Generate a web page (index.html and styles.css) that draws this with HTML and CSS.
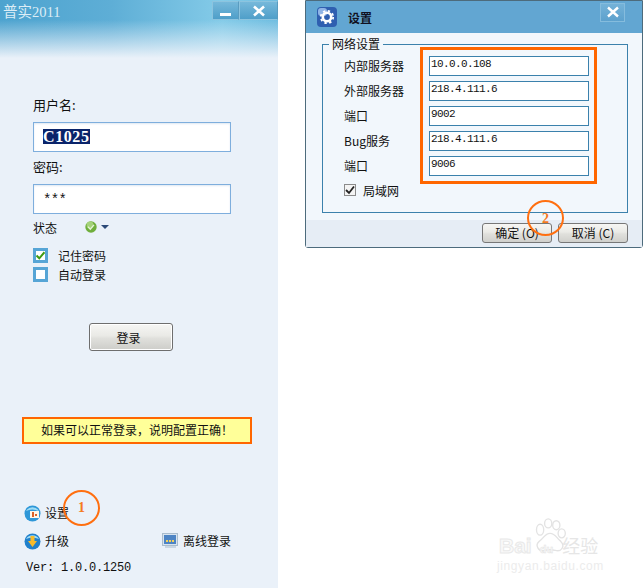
FILE: index.html
```html
<!DOCTYPE html>
<html lang="zh">
<head>
<meta charset="utf-8">
<title>普实2011</title>
<link rel="stylesheet" href="styles.css">
</head>
<body>
<main class="page">
  <section class="login">
    <header class="login-head">
      <span class="login-title">普实2011</span>
      <div class="win-btns">
        <span class="win-btn"><svg width="14" height="12" viewBox="0 0 14 12"><rect x="1" y="8" width="11" height="3" fill="#fff"/></svg></span>
        <span class="win-btn win-btn-wide"><svg width="14" height="12" viewBox="0 0 14 12"><path d="M2 1.5 L12 10.5 M12 1.5 L2 10.5" stroke="#fff" stroke-width="2.6" fill="none"/></svg></span>
      </div>
    </header>
    <div class="login-form">
      <label class="field-label">用户名:</label>
      <div class="login-input"><span class="selected">C1025</span></div>
      <label class="field-label field-label-2">密码:</label>
      <div class="login-input"><span class="mono-val">***</span></div>
      <div class="status-row">
        <span class="status-label">状态</span>
        <svg class="status-icon" width="26" height="12" viewBox="0 0 26 12">
          <circle cx="6" cy="6" r="5.7" fill="#6fae3c"/>
          <circle cx="5" cy="4" r="3.4" fill="#a4d27a"/>
          <path d="M3 5.8 L5.3 8.2 L9 3.8" stroke="#e6f3d8" stroke-width="1.3" fill="none"/>
          <path d="M16 4 H24 L20 8 Z" fill="#2c4a78"/>
        </svg>
      </div>
      <div class="check-row">
        <span class="check-box"><svg width="9" height="9" viewBox="0 0 9 9"><path d="M0.5 4.5 L3.3 7.3 L8.5 1.2" stroke="#3f9a12" stroke-width="2" fill="none"/></svg></span>
        <span>记住密码</span>
      </div>
      <div class="check-row check-row-2">
        <span class="check-box"></span>
        <span>自动登录</span>
      </div>
      <button class="login-btn">登录</button>
      <div class="notice">如果可以正常登录，说明配置正确！</div>
      <div class="link-row link-row-settings">
        <span class="link">
          <svg width="17" height="17" viewBox="0 0 17 17">
            <circle cx="8.5" cy="8.5" r="8" fill="#2e97d8"/>
            <path d="M2 6 A7.5 7.5 0 0 1 15 6 Q8 3 2 6Z" fill="#9fdcf5"/>
            <rect x="6" y="6" width="9" height="7" fill="#fdf6ea"/>
            <rect x="8" y="7" width="2" height="5" fill="#d9622b"/>
            <rect x="11" y="9" width="2" height="2" fill="#d9622b"/>
          </svg>
          设置
        </span>
      </div>
      <div class="link-row">
        <span class="link">
          <svg width="17" height="17" viewBox="0 0 17 17">
            <circle cx="8.5" cy="8.5" r="8" fill="#2080cc"/>
            <path d="M2 6 A7.5 7.5 0 0 1 15 6 Q8 3 2 6Z" fill="#9fdcf5"/>
            <path d="M6.5 3 H10.5 V8 H13 L8.5 14 L4 8 H6.5 Z" fill="#f7bb2c"/>
          </svg>
          升级
        </span>
        <span class="link">
          <svg width="17" height="17" viewBox="0 0 17 17">
            <rect x="0.5" y="0.5" width="15" height="12" fill="#d8e4ef" stroke="#a9bccd"/>
            <rect x="2" y="2" width="12" height="9" fill="#4d84c4"/>
            <rect x="4" y="7" width="2" height="2" fill="#f3d25a"/>
            <rect x="7" y="7" width="2" height="2" fill="#f3d25a"/>
            <rect x="10" y="7" width="2" height="2" fill="#f3d25a"/>
            <rect x="3" y="13" width="11" height="2" fill="#c8d6e3"/>
          </svg>
          离线登录
        </span>
      </div>
      <div class="version">Ver: 1.0.0.1250</div>
    </div>
    <div class="callout callout-1">1</div>
  </section>

  <section class="dialog">
    <header class="dialog-head">
      <svg class="dialog-icon" width="20" height="20" viewBox="0 0 20 20">
        <rect width="20" height="20" rx="4" fill="#2f5fb0"/>
        <rect x="1" y="1" width="9" height="8" rx="3" fill="#8fb4e6"/>
        <circle cx="10" cy="10" r="4.2" fill="none" stroke="#fff" stroke-width="2.6"/>
        <circle cx="10" cy="10" r="6.2" fill="none" stroke="#fff" stroke-width="1.8" stroke-dasharray="2.4 2.47"/>
      </svg>
      <span class="dialog-title">设置</span>
      <span class="dialog-close"><svg width="14" height="12" viewBox="0 0 14 12"><path d="M2 1.5 L12 10.5 M12 1.5 L2 10.5" stroke="#fff" stroke-width="2.4" fill="none"/></svg></span>
    </header>
    <div class="dialog-body">
      <fieldset class="net-group">
        <legend class="net-legend">网络设置</legend>
        <div class="net-columns">
          <div class="net-labels">
            <span>内部服务器</span>
            <span>外部服务器</span>
            <span>端口</span>
            <span>Bug服务</span>
            <span>端口</span>
          </div>
          <div class="net-inputs">
            <div class="net-input">10.0.0.108</div>
            <div class="net-input">218.4.111.6</div>
            <div class="net-input">9002</div>
            <div class="net-input">218.4.111.6</div>
            <div class="net-input">9006</div>
          </div>
        </div>
        <div class="lan-row">
          <span class="lan-check"><svg width="10" height="10" viewBox="0 0 10 10"><path d="M1 5 L4 8 L9 1.5" stroke="#222" stroke-width="1.8" fill="none"/></svg></span>
          <span>局域网</span>
        </div>
      </fieldset>
    </div>
    <footer class="dialog-foot">
      <button class="dlg-btn">确定 (O)</button>
      <button class="dlg-btn">取消 (C)</button>
    </footer>
    <div class="callout callout-2">2</div>
  </section>

  <div class="watermark" aria-hidden="true">
    <svg class="wm-paw" width="36" height="36" viewBox="0 0 40 40">
      <g fill="none" stroke="#e3e3e3" stroke-width="1.5">
        <ellipse cx="9" cy="13" rx="4" ry="6"/>
        <ellipse cx="18" cy="6" rx="4" ry="5"/>
        <ellipse cx="27" cy="8" rx="4" ry="5"/>
        <ellipse cx="33" cy="17" rx="4" ry="5"/>
        <path d="M20 17 C14 17 13 23 8 26 C3 30 7 38 14 36 C18 35 22 35 26 36 C33 38 37 31 32 26 C27 22 26 17 20 17Z"/>
      </g>
    </svg>
    <div class="wm-line1"><span class="wm-bai">Bai</span><span class="wm-du">du</span><span class="wm-jy">经验</span></div>
    <div class="wm-line2">jingyan.baidu.com</div>
  </div>
</main>
</body>
</html>
```

FILE: styles.css
```css
* { box-sizing: border-box; }
html, body { margin: 0; padding: 0; background: #fff; }
body {
  width: 643px;
  height: 588px;
  overflow: hidden;
  font-family: "Noto Sans CJK SC", "Liberation Serif", sans-serif;
  font-size: 12px;
  color: #111;
}
.page { position: relative; display: flex; align-items: flex-start; width: 643px; height: 588px; }

/* login window */
.login {
  position: relative;
  width: 278px;
  height: 588px;
  flex: none;
  background: #eaf1f9;
}
.login-head {
  height: 60px;
  display: flex;
  justify-content: space-between;
  align-items: flex-start;
  padding: 1px 0 0 3px;
  background: linear-gradient(180deg, rgba(234,241,249,0) 0, rgba(234,241,249,0) 20px, #eaf1f9 58px),
              linear-gradient(90deg, #4da3cf 0, #5eaed6 40%, #84cbe8 80%, #6fbde0 100%);
}
.login-title {
  font-family: "Liberation Serif", "Noto Sans CJK SC", serif;
  font-size: 14.5px;
  line-height: 22px;
  color: #dcedf6;
}
.win-btns { display: flex; height: 19px; }
.win-btn {
  width: 27px;
  height: 19px;
  display: flex;
  align-items: center;
  justify-content: center;
  background: linear-gradient(180deg, #76b8da, #4f9fc9);
  border: 1px solid #8cc4df;
  border-right-color: #5a9cc0;
}
.win-btn-wide { width: 39px; }

.login-form { padding: 36px 0 0 33px; }
.field-label { display: block; height: 19px; line-height: 18px; font-size: 13px; }
.field-label-2 { margin-top: 6px; }
.login-input {
  width: 198px;
  height: 30px;
  margin-top: 7px;
  border: 1px solid #7eaedd;
  box-shadow: inset 0 1px 2px #dfe8f2;
  background: #fff;
  padding: 5px 0 0 9px;
  line-height: 18px;
}
.selected {
  display: inline-block;
  background: #0a246a;
  color: #fff;
  font-family: "Liberation Serif", serif;
  font-weight: bold;
  font-size: 16px;
  line-height: 15px;
  height: 15px;
  letter-spacing: 0.6px;
}
.mono-val { font-family: "Liberation Mono", monospace; font-size: 14px; line-height: 18px; letter-spacing: -0.6px; }
.status-row { display: flex; align-items: center; height: 18px; margin-top: 4px; }
.status-label { width: 52px; }
.check-row { display: flex; align-items: center; height: 15px; margin-top: 12px; gap: 10px; }
.check-row-2 { margin-top: 4px; }
.check-box {
  width: 15px;
  height: 15px;
  display: flex;
  align-items: center;
  justify-content: center;
  border: 3px solid #56a5d6;
  background: #fff;
}
.login-btn {
  display: block;
  width: 84px;
  height: 28px;
  margin: 41px 0 0 56px;
  padding: 0 5px 0 0;
  font: inherit;
  color: #111;
  border: 1px solid #6e6e6e;
  border-radius: 3px;
  background: linear-gradient(180deg, #f6f6f4 0, #eaeae6 45%, #e0e0dc 55%, #cdcdc9 100%);
  box-shadow: inset 0 0 0 1px #fff;
}
.notice {
  width: 230px;
  height: 27px;
  margin: 66px 0 0 -11px;
  border: 2px solid #ff6600;
  background: #ffff99;
  text-align: center;
  line-height: 22px;
}
.link-row {
  display: flex;
  width: 207px;
  justify-content: space-between;
  margin: 10px 0 0 -9px;
  height: 18px;
}
.link-row-settings { margin-top: 60px; }
.link { display: flex; align-items: center; gap: 4px; line-height: 16px; }
.version {
  margin: 9px 0 0 -7px;
  font-family: "Liberation Mono", monospace;
  font-size: 12px;
  line-height: 18px;
  letter-spacing: -0.2px;
}

.callout {
  position: absolute;
  width: 37px;
  height: 36px;
  border: 2px solid #ff6f10;
  border-radius: 50%;
  font-family: "Liberation Serif", serif;
  font-weight: bold;
  font-size: 14px;
  line-height: 31px;
  text-align: center;
  color: #f57a1e;
}
.callout-1 { left: 63px; top: 490px; }
.callout-2 { left: 221px; top: 199px; line-height: 34px; }

/* settings dialog */
.dialog {
  position: relative;
  width: 338px;
  height: 248px;
  margin-left: 27px;
  flex: none;
  display: flex;
  flex-direction: column;
  border: 1px solid #4d6b7c;
  border-radius: 0 0 3px 3px;
  background: #f2f7fc;
}
.dialog-head {
  height: 32px;
  flex: none;
  display: flex;
  align-items: center;
  padding: 0 17px 0 11px;
  background: #62a6d2;
}
.dialog-icon { flex: none; }
.dialog-title { margin-left: 11px; font-weight: bold; color: #112; flex: 1; }
.dialog-close {
  width: 25px;
  height: 19px;
  margin-top: -10px;
  display: flex;
  align-items: center;
  justify-content: center;
  background: linear-gradient(180deg, #74b2d8, #5da1cd);
  border: 1px solid #85bcdd;
}
.dialog-body { flex: 1; padding: 3px 14px 0 16px; }
.net-group {
  margin: 0;
  height: 177px;
  padding: 0;
  border: 1px solid #3b81ac;
}
.net-legend { margin-left: 6px; padding: 0 3px; line-height: 16px; }
.net-columns { display: flex; margin-top: -5px; padding-left: 21px; }
.net-labels {
  width: 76px;
  padding-top: 10px;
  display: flex;
  flex-direction: column;
  gap: 7px;
  line-height: 18px;
}
.net-inputs {
  width: 177px;
  height: 137px;
  border: 3px solid #ff6600;
  padding: 6px 0 0 6px;
  display: flex;
  flex-direction: column;
  gap: 5px;
}
.net-input {
  width: 160px;
  height: 20px;
  border: 1px solid #3b81ac;
  background: #fff;
  font-family: "Liberation Mono", monospace;
  font-size: 11px;
  line-height: 15px;
  padding-left: 1px;
  letter-spacing: -0.6px;
}
.lan-row { display: flex; align-items: center; gap: 7px; height: 12px; margin-left: 21px; }
.lan-check {
  width: 12px;
  height: 12px;
  display: flex;
  align-items: center;
  justify-content: center;
  border: 1px solid #8b8b8b;
  background: #f4f4f4;
}
.dialog-foot {
  height: 27px;
  flex: none;
  display: flex;
  justify-content: flex-end;
  align-items: center;
  gap: 6px;
  padding: 0 14px 2px 0;
  background: #e6edf5;
}
.dlg-btn {
  width: 70px;
  height: 20px;
  padding: 0;
  font: inherit;
  line-height: 16px;
  color: #111;
  border: 1px solid #777;
  border-radius: 3px;
  background: linear-gradient(180deg, #f6f6f4 0, #eaeae6 45%, #e0e0dc 55%, #d0d0cc 100%);
}

/* watermark */
.watermark { position: absolute; left: 472px; top: 518px; width: 171px; height: 70px; }
.wm-paw { position: absolute; left: 60px; top: 0; }
.wm-line1 {
  position: absolute;
  left: 27px;
  top: 14px;
  width: 144px;
  font-family: "Liberation Sans", sans-serif;
  font-weight: bold;
  font-size: 21px;
  line-height: 26px;
  color: #fafafa;
  -webkit-text-stroke: 1px #e9e9e9;
  white-space: nowrap;
}
.wm-du { margin-left: 8px; font-size: 11px; -webkit-text-stroke: 0.5px #e4e4e4; }
.wm-jy { margin-left: 9px; font-size: 18px; font-family: "Noto Sans CJK SC", sans-serif; font-weight: normal; color: #e6e6e6; -webkit-text-stroke: 0; }
.wm-line2 {
  position: absolute;
  left: 25px;
  top: 41px;
  font-family: "Liberation Sans", sans-serif;
  font-size: 12px;
  color: #ececec;
  letter-spacing: 0.6px;
}
```
